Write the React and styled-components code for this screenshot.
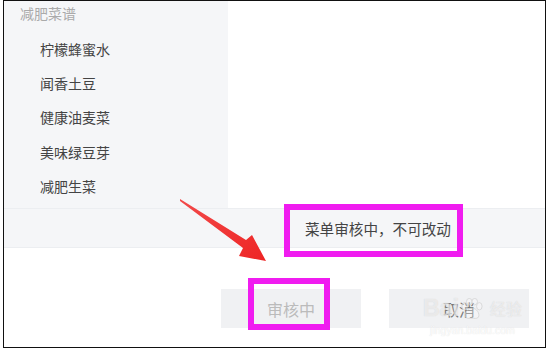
import React from 'react';
import styled, { createGlobalStyle } from 'styled-components';

const GlobalStyle = createGlobalStyle`
  html, body {
    margin: 0;
    padding: 0;
    background: #fff;
  }
  body {
    font-family: "Noto Sans CJK SC", "Microsoft YaHei", sans-serif;
  }
`;

const Page = styled.div`
  width: 551px;
  height: 351px;
  position: relative;
  overflow: hidden;
  background: #fff;
`;

const Frame = styled.div`
  position: relative;
  margin-left: 3px;
  width: 541px;
  height: 346px;
  border: 1px solid #111;
  display: flex;
  flex-direction: column;
  background: #fff;
`;

const Top = styled.div`
  height: 207px;
  display: flex;
`;

const Sidebar = styled.div`
  width: 224px;
  background: #f5f6f8;
  display: flex;
  flex-direction: column;
  overflow: hidden;
`;

const GroupTitle = styled.div`
  font-size: 14px;
  color: #aaa;
  padding-left: 16px;
  height: 26px;
  line-height: 26px;
  margin-top: -1px;
`;

const MenuList = styled.div`
  padding-top: 6px;
  display: flex;
  flex-direction: column;
`;

const MenuItem = styled.div`
  flex-shrink: 0;
  font-size: 14px;
  color: #444;
  padding-left: 36px;
  height: 34.2px;
  line-height: 34px;
`;

const Bar = styled.div`
  height: 38px;
  background: #f5f6f8;
  border-top: 1px solid #eceef1;
  border-bottom: 1px solid #eceef1;
  display: flex;
  align-items: center;
  padding-left: 301px;
`;

const Notice = styled.span`
  font-size: 14.6px;
  color: #444;
`;

const Actions = styled.div`
  display: flex;
  justify-content: flex-end;
  gap: 28px;
  padding: 41px 16px 0 0;
`;

const Button = styled.div`
  width: 140px;
  height: 39px;
  background: #f0f1f3;
  display: flex;
  align-items: center;
  justify-content: center;
  font-size: 16px;
  color: ${p => (p.disabled ? '#bbb' : '#777')};
`;

const Highlight = styled.div`
  position: absolute;
  border: 6px solid #f01cf0;
  box-sizing: border-box;
  pointer-events: none;
`;

const Overlay = styled.svg`
  position: absolute;
  left: 0;
  top: 0;
  pointer-events: none;
`;

const Watermark = styled.div`
  position: absolute;
  left: 423px;
  top: 295px;
  display: flex;
  flex-direction: column;
  align-items: center;
  pointer-events: none;
  opacity: 0.75;
`;

const MarkLine = styled.div`
  display: flex;
  align-items: center;
  gap: 1px;
  font-family: "Liberation Sans", Arial, sans-serif;
  font-size: 23px;
  font-weight: bold;
  color: rgba(255, 255, 255, 0.6);
  text-shadow: 0 0 1px #c4c4c4;
  line-height: 27px;
`;

const MarkCn = styled.span`
  font-family: "Noto Sans CJK SC", sans-serif;
  font-size: 16px;
  font-weight: normal;
  margin-left: 5px;
`;

const MarkUrl = styled.div`
  font-family: "Liberation Sans", Arial, sans-serif;
  font-size: 10.5px;
  color: rgba(255, 255, 255, 0.9);
  text-shadow: 0 0 1px #d0d0d0;
  margin-top: 2px;
`;

const items = ['柠檬蜂蜜水', '闻香土豆', '健康油麦菜', '美味绿豆芽', '减肥生菜'];

export default function App() {
  return (
    <Page>
      <GlobalStyle />
      <Frame>
        <Top>
          <Sidebar>
            <GroupTitle>减肥菜谱</GroupTitle>
            <MenuList>
              {items.map(name => (
                <MenuItem key={name}>{name}</MenuItem>
              ))}
            </MenuList>
          </Sidebar>
        </Top>
        <Bar>
          <Notice>菜单审核中，不可改动</Notice>
        </Bar>
        <Actions>
          <Button disabled>审核中</Button>
          <Button>取消</Button>
        </Actions>
      </Frame>

      <Watermark>
        <MarkLine>
          <span>Bai</span>
          <svg width="24" height="22" viewBox="0 0 26 24">
            <g fill="rgba(255,255,255,0.4)" stroke="#cfcfcf" strokeWidth="1">
              <ellipse cx="5" cy="9" rx="3" ry="4" />
              <ellipse cx="10" cy="4" rx="3" ry="3.5" />
              <ellipse cx="16" cy="4" rx="3" ry="3.5" />
              <ellipse cx="21" cy="9" rx="3" ry="4" />
              <path d="M13 11 C8 11 4 17 6 21 C8 23 11 22 13 22 C15 22 18 23 20 21 C22 17 18 11 13 11 Z" />
            </g>
          </svg>
          <MarkCn>经验</MarkCn>
        </MarkLine>
        <MarkUrl>jingyan.baidu.com</MarkUrl>
      </Watermark>

      <Highlight style={{ left: 284, top: 204, width: 179, height: 53 }} />
      <Highlight style={{ left: 248, top: 278, width: 82, height: 52 }} />

      <Overlay width="551" height="351" viewBox="0 0 551 351">
        <defs>
          <linearGradient id="arrowFill" x1="0" y1="0" x2="1" y2="1">
            <stop offset="0" stopColor="#f24a4a" />
            <stop offset="1" stopColor="#ee2424" />
          </linearGradient>
        </defs>
        <polygon
          points="180,199 246,240 252,235 266,261 239,256 243,248 180,201"
          fill="url(#arrowFill)"
        />
      </Overlay>
    </Page>
  );
}
